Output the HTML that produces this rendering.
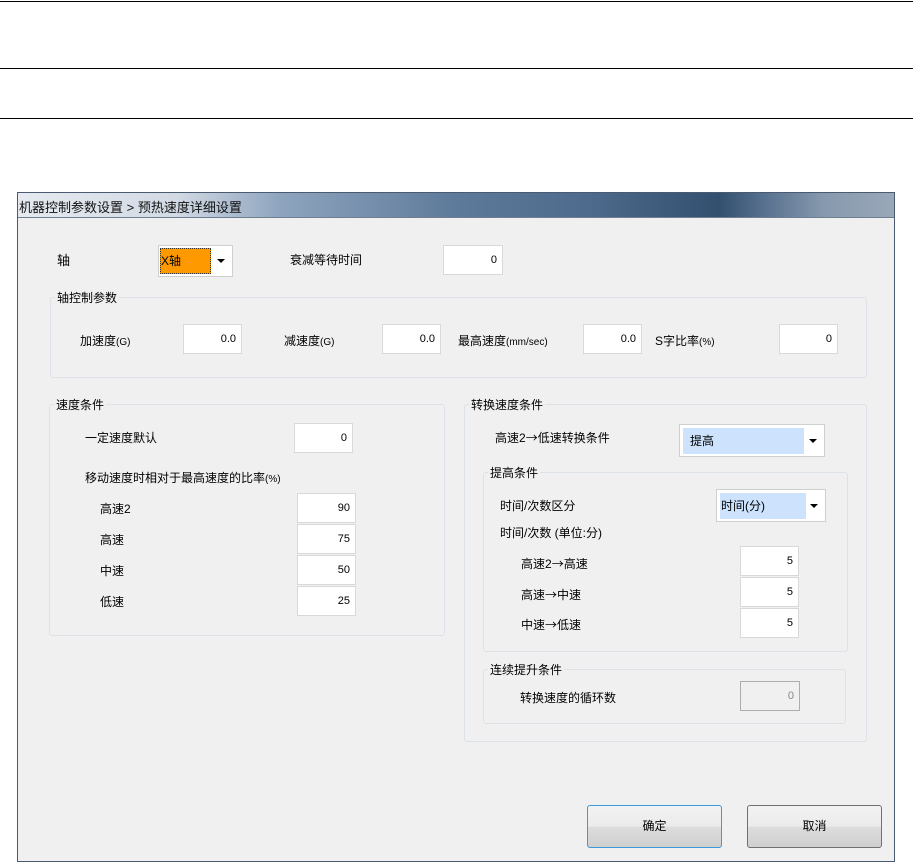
<!DOCTYPE html><html><head><meta charset="utf-8"><style>
body{margin:0;width:913px;height:864px;background:#fff;position:relative;overflow:hidden;font-family:"Liberation Sans","Noto Sans CJK SC",sans-serif;font-size:12px;color:#000}
.a{position:absolute}
.r{font-family:"Noto Sans CJK SC",sans-serif}
.hl{position:absolute;left:0;width:913px;height:1px;background:#000}
.win{position:absolute;left:17px;top:192px;width:878px;height:670px;background:#f0f0f0;border:1px solid #4a5a70;box-sizing:border-box}
.tb{position:absolute;left:0;top:0;width:100%;height:24px;background:linear-gradient(90deg,#e6eaf0 0%,#d2dae4 18%,#8ea4be 30%,#5e7a9a 50%,#4e6a8c 65%,#33506f 80%,#56708e 85%,#8799ae 92%,#9aa8b8 100%);border-bottom:1px solid #6f7f93}
.tb span{position:absolute;left:1px;top:4px;font-size:13px;color:#111}
.g{position:absolute;border:1px solid #dde2e8;border-radius:3px}
.gl{position:absolute;background:#f0f0f0;padding:0 2px;top:-9px;left:4px;font-size:12px}
.in{position:absolute;background:#fff;border:1px solid #d9d9d9;box-sizing:border-box;text-align:right;padding-right:5px;line-height:28px;font-size:11px}
.cb{position:absolute;background:#fff;border:1px solid #cfcfcf;box-sizing:border-box}
.ar{position:absolute;right:7px;top:50%;margin-top:-2px;width:0;height:0;border-left:4px solid transparent;border-right:4px solid transparent;border-top:4px solid #000}
.bt{position:absolute;height:43px;width:135px;box-sizing:border-box;border:1px solid #707070;border-radius:3px;background:linear-gradient(#f2f2f2,#ebebeb 50%,#dddddd 51%,#cfcfcf);text-align:center;line-height:41px;font-size:12px}
</style></head><body>
<div class="hl" style="top:1px"></div><div class="hl" style="top:68px"></div><div class="hl" style="top:118px"></div>
<div class="win" id="w">
<div class="tb"><span>机器控制参数设置 &gt; 预热速度详细设置</span></div>
</div>
<div class="a" style="left:57px;top:250px;font-size:13px">轴</div>
<div class="cb" style="left:158px;top:245px;width:75px;height:32px"><div class="a" style="left:1px;top:2px;width:51px;height:26px;background:#ff9900;border:1px dotted #333;box-sizing:border-box;line-height:24px;font-size:12px">X轴</div><div class="ar"></div></div>
<div class="a" style="left:290px;top:251px;font-size:12px">衰减等待时间</div>
<div class="in" style="left:443px;top:245px;width:60px;height:30px">0</div>
<div class="g" style="left:50px;top:297px;width:815px;height:79px"><div class="gl">轴控制参数</div></div>
<div class="a" style="left:80px;top:332px">加速度<span style="font-size:10px">(G)</span></div>
<div class="in" style="left:183px;top:324px;width:59px;height:30px">0.0</div>
<div class="a" style="left:284px;top:332px">减速度<span style="font-size:10px">(G)</span></div>
<div class="in" style="left:382px;top:324px;width:59px;height:30px">0.0</div>
<div class="a" style="left:458px;top:332px">最高速度<span style="font-size:10px">(mm/sec)</span></div>
<div class="in" style="left:583px;top:324px;width:59px;height:30px">0.0</div>
<div class="a" style="left:655px;top:332px">S字比率<span style="font-size:10px">(%)</span></div>
<div class="in" style="left:779px;top:324px;width:59px;height:30px">0</div>
<div class="g" style="left:49px;top:404px;width:394px;height:230px"><div class="gl">速度条件</div></div>
<div class="a" style="left:85px;top:429px">一定速度默认</div>
<div class="in" style="left:294px;top:423px;width:59px;height:30px">0</div>
<div class="a" style="left:85px;top:469px">移动速度时相对于最高速度的比率<span style="font-size:10px">(%)</span></div>
<div class="a" style="left:100px;top:500px">高速2</div><div class="in" style="left:297px;top:493px;width:59px;height:30px">90</div>
<div class="a" style="left:100px;top:531px">高速</div><div class="in" style="left:297px;top:524px;width:59px;height:30px">75</div>
<div class="a" style="left:100px;top:562px">中速</div><div class="in" style="left:297px;top:555px;width:59px;height:30px">50</div>
<div class="a" style="left:100px;top:593px">低速</div><div class="in" style="left:297px;top:586px;width:59px;height:30px">25</div>
<div class="g" style="left:464px;top:404px;width:401px;height:336px"><div class="gl">转换速度条件</div></div>
<div class="a" style="left:495px;top:429px">高速2<span class="r">→</span>低速转换条件</div>
<div class="cb" style="left:679px;top:424px;width:146px;height:33px"><div class="a" style="left:3px;top:3px;width:121px;height:26px;background:#cce2fd;line-height:26px;padding-left:7px;box-sizing:border-box">提高</div><div class="ar"></div></div>
<div class="g" style="left:483px;top:472px;width:363px;height:178px"><div class="gl">提高条件</div></div>
<div class="a" style="left:500px;top:497px">时间/次数区分</div>
<div class="cb" style="left:716px;top:489px;width:110px;height:33px"><div class="a" style="left:3px;top:3px;width:86px;height:26px;background:#cce2fd;line-height:26px;padding-left:1px;box-sizing:border-box">时间(分)</div><div class="ar"></div></div>
<div class="a" style="left:500px;top:524px">时间/次数 (单位:分)</div>
<div class="a" style="left:521px;top:555px">高速2<span class="r">→</span>高速</div><div class="in" style="left:740px;top:546px;width:59px;height:30px">5</div>
<div class="a" style="left:521px;top:586px">高速<span class="r">→</span>中速</div><div class="in" style="left:740px;top:577px;width:59px;height:30px">5</div>
<div class="a" style="left:521px;top:616px">中速<span class="r">→</span>低速</div><div class="in" style="left:740px;top:608px;width:59px;height:30px">5</div>
<div class="g" style="left:483px;top:669px;width:361px;height:53px"><div class="gl">连续提升条件</div></div>
<div class="a" style="left:520px;top:689px">转换速度的循环数</div>
<div class="in" style="left:740px;top:681px;width:60px;height:30px;background:#f0f0f0;border-color:#adadad;color:#888">0</div>
<div class="bt" style="left:587px;top:805px;border-color:#3c9ad8">确定</div>
<div class="bt" style="left:747px;top:805px">取消</div>
</body></html>
